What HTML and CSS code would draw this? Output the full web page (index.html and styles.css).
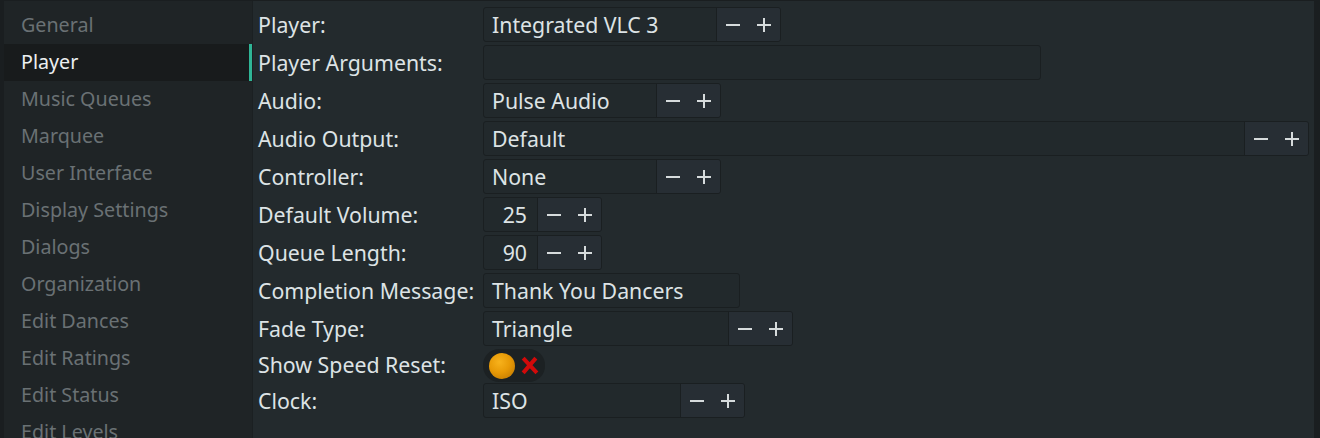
FILE: index.html
```html
<!DOCTYPE html>
<html>
<head>
<meta charset="utf-8">
<link rel="stylesheet" href="styles.css">
</head>
<body>
<div class="app">
  <nav class="sidebar">
    <div class="nav-item">General</div>
    <div class="nav-item active">Player</div>
    <div class="nav-item">Music Queues</div>
    <div class="nav-item">Marquee</div>
    <div class="nav-item">User Interface</div>
    <div class="nav-item">Display Settings</div>
    <div class="nav-item">Dialogs</div>
    <div class="nav-item">Organization</div>
    <div class="nav-item">Edit Dances</div>
    <div class="nav-item">Edit Ratings</div>
    <div class="nav-item">Edit Status</div>
    <div class="nav-item">Edit Levels</div>
  </nav>
  <div class="divider"><span class="marker"></span></div>
  <main class="panel">
    <div class="form">
      <label class="lbl">Player:</label>
      <div class="field"><div class="box w-player"><span class="val">Integrated VLC 3</span><span class="btns"><svg class="ico" viewBox="0 0 14 14"><rect x="0" y="6" width="14" height="2"/></svg><svg class="ico" viewBox="0 0 14 14"><rect x="0" y="6" width="14" height="2"/><rect x="6" y="0" width="2" height="14"/></svg></span></div></div>

      <label class="lbl">Player Arguments:</label>
      <div class="field"><div class="box w-args"><span class="val"></span></div></div>

      <label class="lbl">Audio:</label>
      <div class="field"><div class="box w-audio"><span class="val">Pulse Audio</span><span class="btns"><svg class="ico" viewBox="0 0 14 14"><rect x="0" y="6" width="14" height="2"/></svg><svg class="ico" viewBox="0 0 14 14"><rect x="0" y="6" width="14" height="2"/><rect x="6" y="0" width="2" height="14"/></svg></span></div></div>

      <label class="lbl">Audio Output:</label>
      <div class="field"><div class="box w-output"><span class="val">Default</span><span class="btns"><svg class="ico" viewBox="0 0 14 14"><rect x="0" y="6" width="14" height="2"/></svg><svg class="ico" viewBox="0 0 14 14"><rect x="0" y="6" width="14" height="2"/><rect x="6" y="0" width="2" height="14"/></svg></span></div></div>

      <label class="lbl">Controller:</label>
      <div class="field"><div class="box w-audio"><span class="val">None</span><span class="btns"><svg class="ico" viewBox="0 0 14 14"><rect x="0" y="6" width="14" height="2"/></svg><svg class="ico" viewBox="0 0 14 14"><rect x="0" y="6" width="14" height="2"/><rect x="6" y="0" width="2" height="14"/></svg></span></div></div>

      <label class="lbl">Default Volume:</label>
      <div class="field"><div class="box w-spin"><span class="val num">25</span><span class="btns"><svg class="ico" viewBox="0 0 14 14"><rect x="0" y="6" width="14" height="2"/></svg><svg class="ico" viewBox="0 0 14 14"><rect x="0" y="6" width="14" height="2"/><rect x="6" y="0" width="2" height="14"/></svg></span></div></div>

      <label class="lbl">Queue Length:</label>
      <div class="field"><div class="box w-spin"><span class="val num">90</span><span class="btns"><svg class="ico" viewBox="0 0 14 14"><rect x="0" y="6" width="14" height="2"/></svg><svg class="ico" viewBox="0 0 14 14"><rect x="0" y="6" width="14" height="2"/><rect x="6" y="0" width="2" height="14"/></svg></span></div></div>

      <label class="lbl">Completion Message:</label>
      <div class="field"><div class="box w-msg"><span class="val">Thank You Dancers</span></div></div>

      <label class="lbl">Fade Type:</label>
      <div class="field"><div class="box w-fade"><span class="val">Triangle</span><span class="btns"><svg class="ico" viewBox="0 0 14 14"><rect x="0" y="6" width="14" height="2"/></svg><svg class="ico" viewBox="0 0 14 14"><rect x="0" y="6" width="14" height="2"/><rect x="6" y="0" width="2" height="14"/></svg></span></div></div>

      <label class="lbl short">Show Speed Reset:</label>
      <div class="field short"><div class="toggle"><span class="knob"></span><svg class="cross" viewBox="0 0 18 18"><path d="M3 2 L16 16 M15 2 L3 16"/></svg></div></div>

      <label class="lbl">Clock:</label>
      <div class="field"><div class="box w-clock"><span class="val">ISO</span><span class="btns"><svg class="ico" viewBox="0 0 14 14"><rect x="0" y="6" width="14" height="2"/></svg><svg class="ico" viewBox="0 0 14 14"><rect x="0" y="6" width="14" height="2"/><rect x="6" y="0" width="2" height="14"/></svg></span></div></div>
    </div>
  </main>
</div>
</body>
</html>
```
FILE: styles.css
```css
html, body {
  margin: 0;
  padding: 0;
  height: 438px;
  overflow: hidden;
  background: #1a1e20;
  font-family: "Noto Sans", "Open Sans", sans-serif;
  font-size: 21.3px;
}
.app {
  display: flex;
  height: 437px;
  padding-top: 1px;
  padding-left: 4px;
  padding-right: 6px;
}
.sidebar {
  width: 245px;
  background: #1f2426;
  padding-top: 6px;
  overflow: hidden;
  flex: none;
  font-size: 19.7px;
}
.nav-item {
  height: 37px;
  line-height: 36px;
  padding-left: 17px;
  color: #6a7174;
  white-space: nowrap;
}
.nav-item.active {
  background: #181b1c;
  color: #eceff0;
}
.divider {
  width: 3px;
  flex: none;
  background: #1f2426;
  padding-top: 43px;
}
.marker {
  display: block;
  width: 3px;
  height: 37px;
  background: #2fb596;
}
.panel {
  flex: 1;
  background: #232a2d;
  border-left: 1px solid #1b2022;
  padding: 6px 0 0 5px;
}
.form {
  display: grid;
  grid-template-columns: 225px 1fr;
  grid-template-rows: repeat(9, 35px) 31px 35px;
  row-gap: 3px;
}
.lbl {
  color: #dde3e5;
  line-height: 35px;
  white-space: nowrap;
}
.lbl.short {
  line-height: 31px;
}
.field {
  display: flex;
  align-items: stretch;
}
.box {
  display: flex;
  box-sizing: border-box;
  border: 1px solid #1a1f21;
  border-radius: 3px;
  background: #22292c;
  overflow: hidden;
}
.val {
  flex: 1;
  padding-left: 8px;
  color: #dde3e5;
  line-height: 33px;
  white-space: nowrap;
}
.val.num {
  text-align: right;
  padding-right: 10px;
  padding-left: 0;
}
.btns {
  width: 64px;
  flex: none;
  display: flex;
  align-items: center;
  justify-content: space-around;
  background: #272e34;
  border-left: 1px solid #1a1f21;
  padding: 0 1px;
  box-sizing: border-box;
}
.ico {
  width: 14px;
  height: 14px;
  fill: #d6dbdc;
}
.w-player { width: 298px; }
.w-args { width: 558px; }
.w-audio { width: 238px; }
.w-output { width: 826px; }
.w-spin { width: 119px; }
.w-msg { width: 257px; }
.w-fade { width: 310px; }
.w-clock { width: 262px; }
.toggle {
  width: 62px;
  height: 33px;
  margin-top: 0;
  border-radius: 16px;
  background: #1c2123;
  display: flex;
  align-items: center;
  padding-left: 6px;
  box-sizing: border-box;
  gap: 5px;
}
.knob {
  width: 26px;
  height: 26px;
  border-radius: 50%;
  background: radial-gradient(circle at 40% 35%, #f7b21c 0%, #e89a06 45%, #b87100 100%);
  flex: none;
}
.cross {
  width: 19px;
  height: 19px;
  fill: none;
  stroke: #d10a0a;
  stroke-width: 3.8;
  stroke-linecap: butt;
}
```
